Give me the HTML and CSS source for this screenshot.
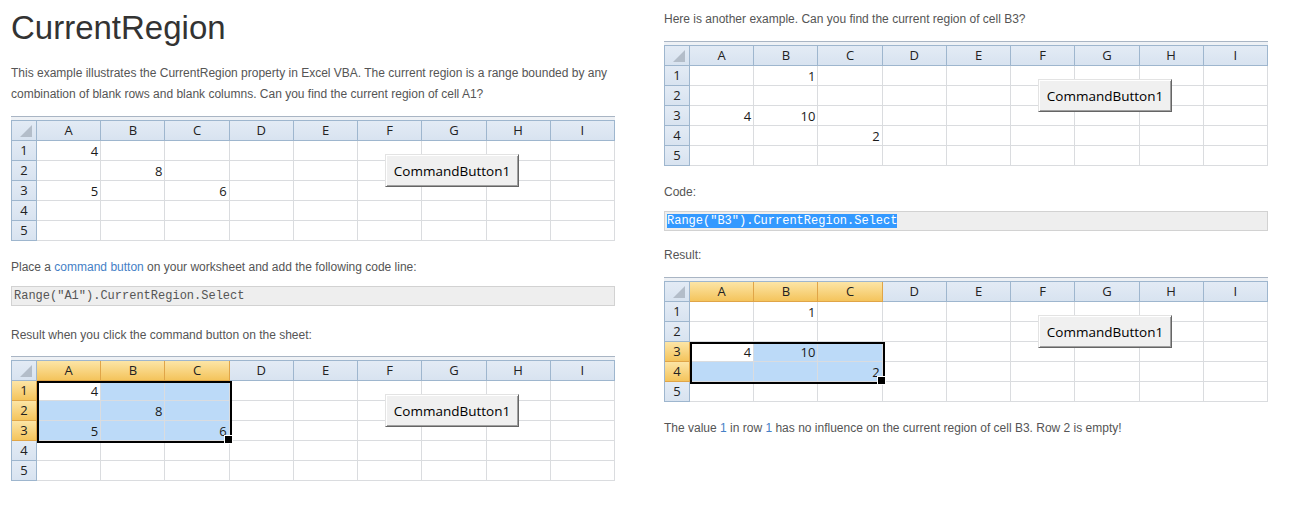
FILE: index.html
```html
<!DOCTYPE html>
<html lang="en">
<head>
<meta charset="utf-8">
<title>CurrentRegion</title>
<link rel="stylesheet" href="styles.css">
</head>
<body>
<div class="page">
  <div class="col">
    <h1 class="title">CurrentRegion</h1>
    <p class="text intro">This example illustrates the CurrentRegion property in Excel VBA. The current region is a range bounded by any<br>combination of blank rows and blank columns. Can you find the current region of cell A1?</p>

    <div class="sheet">
      <div class="grid">
        <div class="hd corner"></div><div class="hd">A</div><div class="hd">B</div><div class="hd">C</div><div class="hd">D</div><div class="hd">E</div><div class="hd">F</div><div class="hd">G</div><div class="hd">H</div><div class="hd">I</div>
        <div class="hd">1</div><div class="c">4</div><div class="c"></div><div class="c"></div><div class="c"></div><div class="c"></div><div class="c"></div><div class="c"></div><div class="c"></div><div class="c"></div>
        <div class="hd">2</div><div class="c"></div><div class="c">8</div><div class="c"></div><div class="c"></div><div class="c"></div><div class="c"></div><div class="c"></div><div class="c"></div><div class="c"></div>
        <div class="hd">3</div><div class="c">5</div><div class="c"></div><div class="c">6</div><div class="c"></div><div class="c"></div><div class="c"></div><div class="c"></div><div class="c"></div><div class="c"></div>
        <div class="hd">4</div><div class="c"></div><div class="c"></div><div class="c"></div><div class="c"></div><div class="c"></div><div class="c"></div><div class="c"></div><div class="c"></div><div class="c"></div>
        <div class="hd">5</div><div class="c"></div><div class="c"></div><div class="c"></div><div class="c"></div><div class="c"></div><div class="c"></div><div class="c"></div><div class="c"></div><div class="c"></div>
      </div>
      <button class="cmd" type="button">CommandButton1</button>
    </div>

    <p class="text after-sheet">Place a <span class="link">command button</span> on your worksheet and add the following code line:</p>
    <div class="code">Range("A1").CurrentRegion.Select</div>
    <p class="text result-left">Result when you click the command button on the sheet:</p>

    <div class="sheet sheet-tight">
      <div class="grid">
        <div class="hd corner"></div><div class="hd on">A</div><div class="hd on">B</div><div class="hd on">C</div><div class="hd">D</div><div class="hd">E</div><div class="hd">F</div><div class="hd">G</div><div class="hd">H</div><div class="hd">I</div>
        <div class="hd on">1</div><div class="c">4</div><div class="c sel"></div><div class="c sel"></div><div class="c"></div><div class="c"></div><div class="c"></div><div class="c"></div><div class="c"></div><div class="c"></div>
        <div class="hd on">2</div><div class="c sel"></div><div class="c sel">8</div><div class="c sel"></div><div class="c"></div><div class="c"></div><div class="c"></div><div class="c"></div><div class="c"></div><div class="c"></div>
        <div class="hd on">3</div><div class="c sel">5</div><div class="c sel"></div><div class="c sel">6</div><div class="c"></div><div class="c"></div><div class="c"></div><div class="c"></div><div class="c"></div><div class="c"></div>
        <div class="hd">4</div><div class="c"></div><div class="c"></div><div class="c"></div><div class="c"></div><div class="c"></div><div class="c"></div><div class="c"></div><div class="c"></div><div class="c"></div>
        <div class="hd">5</div><div class="c"></div><div class="c"></div><div class="c"></div><div class="c"></div><div class="c"></div><div class="c"></div><div class="c"></div><div class="c"></div><div class="c"></div>
        <div class="range rows-1-3"></div>
      </div>
      <button class="cmd" type="button">CommandButton1</button>
    </div>
  </div>

  <div class="col">
    <p class="text first">Here is another example. Can you find the current region of cell B3?</p>

    <div class="sheet">
      <div class="grid">
        <div class="hd corner"></div><div class="hd">A</div><div class="hd">B</div><div class="hd">C</div><div class="hd">D</div><div class="hd">E</div><div class="hd">F</div><div class="hd">G</div><div class="hd">H</div><div class="hd">I</div>
        <div class="hd">1</div><div class="c"></div><div class="c">1</div><div class="c"></div><div class="c"></div><div class="c"></div><div class="c"></div><div class="c"></div><div class="c"></div><div class="c"></div>
        <div class="hd">2</div><div class="c"></div><div class="c"></div><div class="c"></div><div class="c"></div><div class="c"></div><div class="c"></div><div class="c"></div><div class="c"></div><div class="c"></div>
        <div class="hd">3</div><div class="c">4</div><div class="c">10</div><div class="c"></div><div class="c"></div><div class="c"></div><div class="c"></div><div class="c"></div><div class="c"></div><div class="c"></div>
        <div class="hd">4</div><div class="c"></div><div class="c"></div><div class="c">2</div><div class="c"></div><div class="c"></div><div class="c"></div><div class="c"></div><div class="c"></div><div class="c"></div>
        <div class="hd">5</div><div class="c"></div><div class="c"></div><div class="c"></div><div class="c"></div><div class="c"></div><div class="c"></div><div class="c"></div><div class="c"></div><div class="c"></div>
      </div>
      <button class="cmd" type="button">CommandButton1</button>
    </div>

    <p class="text after-sheet">Code:</p>
    <div class="code"><span class="picked">Range("B3").CurrentRegion.Select</span></div>
    <p class="text result-right">Result:</p>

    <div class="sheet">
      <div class="grid">
        <div class="hd corner"></div><div class="hd on">A</div><div class="hd on">B</div><div class="hd on">C</div><div class="hd">D</div><div class="hd">E</div><div class="hd">F</div><div class="hd">G</div><div class="hd">H</div><div class="hd">I</div>
        <div class="hd">1</div><div class="c"></div><div class="c">1</div><div class="c"></div><div class="c"></div><div class="c"></div><div class="c"></div><div class="c"></div><div class="c"></div><div class="c"></div>
        <div class="hd">2</div><div class="c"></div><div class="c"></div><div class="c"></div><div class="c"></div><div class="c"></div><div class="c"></div><div class="c"></div><div class="c"></div><div class="c"></div>
        <div class="hd on">3</div><div class="c">4</div><div class="c sel">10</div><div class="c sel"></div><div class="c"></div><div class="c"></div><div class="c"></div><div class="c"></div><div class="c"></div><div class="c"></div>
        <div class="hd on">4</div><div class="c sel"></div><div class="c sel"></div><div class="c sel">2</div><div class="c"></div><div class="c"></div><div class="c"></div><div class="c"></div><div class="c"></div><div class="c"></div>
        <div class="hd">5</div><div class="c"></div><div class="c"></div><div class="c"></div><div class="c"></div><div class="c"></div><div class="c"></div><div class="c"></div><div class="c"></div><div class="c"></div>
        <div class="range rows-3-4"></div>
      </div>
      <button class="cmd" type="button">CommandButton1</button>
    </div>

    <p class="text after-sheet">The value <span class="link">1</span> in row <span class="link">1</span> has no influence on the current region of cell B3. Row 2 is empty!</p>
  </div>
</div>
</body>
</html>
```

FILE: styles.css
```css
* {
  box-sizing: border-box;
}

body {
  margin: 0;
  background: #fff;
  font-family: "Liberation Sans", Arial, sans-serif;
  font-size: 12px;
  color: #555;
}

.page {
  display: flex;
  gap: 49px;
  padding-left: 11px;
}

.col {
  flex: none;
  width: 604px;
}

.title {
  margin: 8px 0 0;
  font-size: 33px;
  line-height: 40px;
  font-weight: normal;
  color: #333;
}

.text {
  margin: 0;
  line-height: 21px;
  white-space: nowrap;
}

.intro {
  margin-top: 15px;
}

.first {
  margin-top: 9px;
}

.after-sheet {
  margin-top: 16px;
}

.result-left {
  margin-top: 19px;
}

.result-right {
  margin-top: 14px;
}

.link {
  color: #4580c6;
}

/* code line */
.code {
  margin-top: 8px;
  height: 20px;
  border: 1px solid #d2d2d2;
  background: #eee;
  padding-left: 2px;
  font-family: "Liberation Mono", "Courier New", monospace;
  font-size: 12px;
  line-height: 18px;
  color: #555;
  white-space: pre;
}

.picked {
  background: #3399ff;
  color: #fff;
}

/* spreadsheet */
.sheet {
  position: relative;
  margin-top: 11px;
  border-top: 1px solid #a9b5c4;
  padding-top: 3px;
  background: #eef1f5;
}

.sheet-tight {
  margin-top: 10px;
}

.grid {
  position: relative;
  display: grid;
  grid-template-columns: 25px repeat(9, 1fr);
  grid-template-rows: repeat(6, 20px);
  border-top: 1px solid #9eb6ce;
  border-left: 1px solid #9eb6ce;
  background: #fff;
  font-family: "Open Sans", "Noto Sans", sans-serif;
  font-size: 13px;
  color: #1a1a1a;
}

.hd {
  background: linear-gradient(#e3ebf5, #d8e3f0);
  border-right: 1px solid #9eb6ce;
  border-bottom: 1px solid #9eb6ce;
  text-align: center;
  line-height: 19px;
  color: #222;
}

.hd.on {
  background: linear-gradient(#fce5a6, #f4c45c);
  border-color: #e0a548;
}

.corner {
  position: relative;
}

.corner::after {
  content: "";
  position: absolute;
  right: 4px;
  bottom: 3px;
  width: 12px;
  height: 12px;
  background: #b3bdc9;
  clip-path: polygon(100% 0, 100% 100%, 0 100%);
}

.c {
  border-right: 1px solid #dadcdf;
  border-bottom: 1px solid #dadcdf;
  text-align: right;
  padding-right: 2px;
  line-height: 20px;
}

.c.sel {
  background: #bcdaf8;
}

.range {
  position: absolute;
  grid-column: 2 / 5;
  top: 0;
  left: 0;
  right: -2px;
  bottom: -2px;
  border: 2px solid #000;
}

.rows-1-3 {
  grid-row: 2 / 5;
}

.rows-3-4 {
  grid-row: 4 / 6;
}

.range::after {
  content: "";
  position: absolute;
  right: -3px;
  bottom: -3px;
  width: 7px;
  height: 7px;
  background: #000;
  border: 1px solid #fff;
}

.cmd {
  position: absolute;
  left: 374px;
  top: 37px;
  width: 134px;
  height: 33px;
  margin: 0;
  padding: 0;
  background: #f0f0f0;
  border: 1px solid;
  border-color: #e3e3e3 #656565 #656565 #e3e3e3;
  box-shadow: inset 1px 1px #fff, inset -1px -1px #a0a0a0;
  font-family: "Open Sans", "Noto Sans", sans-serif;
  font-size: 13.5px;
  color: #000;
}
```
